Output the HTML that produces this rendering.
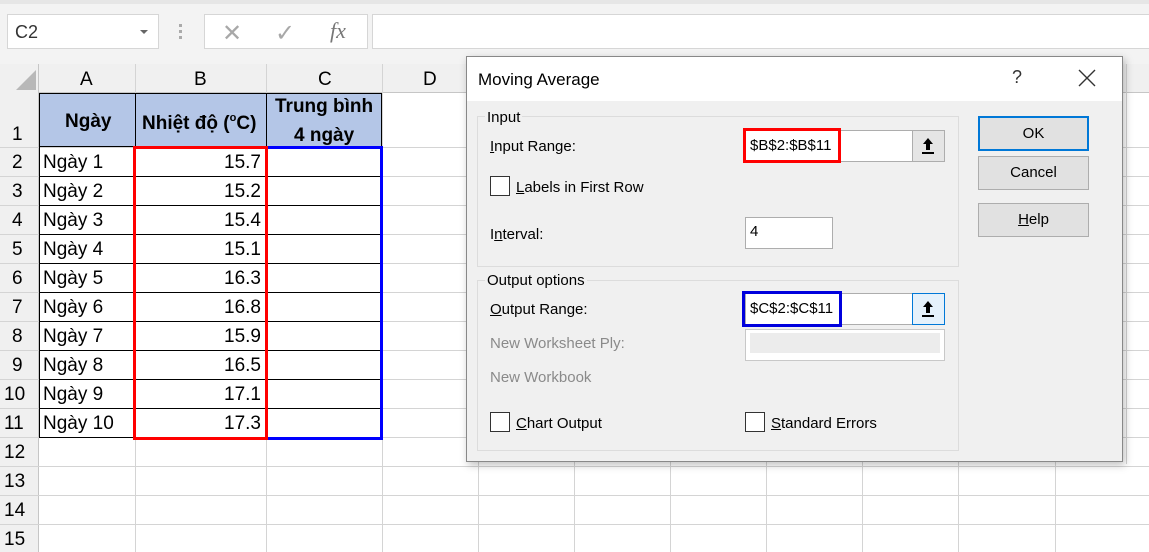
<!DOCTYPE html>
<html><head><meta charset="utf-8"><style>
*{box-sizing:border-box;margin:0;padding:0}
body{width:1149px;height:552px;overflow:hidden;background:#fff;font-family:"Liberation Sans",sans-serif;position:relative}
.a{position:absolute}
.t{font-size:19px;color:#000;white-space:nowrap}
.hl{position:absolute;height:1px;background:#d4d4d4}
.vl{position:absolute;width:1px;background:#d4d4d4}
.d{font-size:15px;color:#000;white-space:nowrap}
.g{color:#8a8a8a}
.cb{position:absolute;width:20px;height:20px;border:1px solid #333;background:#fff}
.btn{position:absolute;left:978px;width:111px;background:#e1e1e1;border:1px solid #adadad;font-size:15px;text-align:center}
</style></head><body>
<div class="a" style="left:0;top:0;width:1149px;height:64px;background:#f3f3f3"></div>
<div class="a" style="left:0;top:0;width:1149px;height:4px;background:#e6e6e6"></div>
<div class="a" style="left:7px;top:14px;width:152px;height:35px;background:#fff;border:1px solid #d6d6d6"></div>
<div class="a t" style="left:15px;top:22px;font-size:18px;color:#333">C2</div>
<div class="a" style="left:140px;top:30px;border-left:4px solid transparent;border-right:4px solid transparent;border-top:4px solid #666"></div>
<div class="a" style="left:179px;top:24px;width:3px;height:3px;background:#aaa;box-shadow:0 6px #aaa,0 12px #aaa"></div>
<div class="a" style="left:204px;top:14px;width:164px;height:35px;background:#fff;border:1px solid #d6d6d6"></div>
<div class="a" style="left:222px;top:19px;font-size:24px;color:#a8a8a8">✕</div>
<div class="a" style="left:275px;top:19px;font-size:24px;color:#a8a8a8">✓</div>
<div class="a" style="left:330px;top:18px;font-size:22px;color:#777;font-family:'Liberation Serif',serif;font-style:italic">fx</div>
<div class="a" style="left:372px;top:14px;width:790px;height:35px;background:#fff;border:1px solid #d6d6d6"></div>
<div class="a" style="left:0;top:64px;width:1149px;height:29px;background:#f0f0f0;border-bottom:1px solid #c6c6c6"></div>
<div class="a" style="left:0;top:64px;width:39px;height:488px;background:#f0f0f0;border-right:1px solid #c6c6c6"></div>
<div class="a" style="left:16px;top:70px;border-left:20px solid transparent;border-bottom:20px solid #b8b8b8"></div>
<div class="a t" style="left:80px;top:69px">A</div>
<div class="a t" style="left:194px;top:69px">B</div>
<div class="a t" style="left:318px;top:69px">C</div>
<div class="a t" style="left:423px;top:69px">D</div>
<div class="vl" style="left:135px;top:64px;height:488px"></div>
<div class="vl" style="left:266px;top:64px;height:488px"></div>
<div class="vl" style="left:382px;top:64px;height:488px"></div>
<div class="vl" style="left:478px;top:64px;height:488px"></div>
<div class="vl" style="left:574px;top:461px;height:91px"></div>
<div class="vl" style="left:670px;top:461px;height:91px"></div>
<div class="vl" style="left:766px;top:461px;height:91px"></div>
<div class="vl" style="left:862px;top:461px;height:91px"></div>
<div class="vl" style="left:958px;top:461px;height:91px"></div>
<div class="vl" style="left:1055px;top:461px;height:91px"></div>
<div class="vl" style="left:1126px;top:64px;height:400px"></div>
<div class="hl" style="left:0;top:147px;width:1149px"></div>
<div class="hl" style="left:0;top:176px;width:1149px"></div>
<div class="hl" style="left:0;top:205px;width:1149px"></div>
<div class="hl" style="left:0;top:234px;width:1149px"></div>
<div class="hl" style="left:0;top:263px;width:1149px"></div>
<div class="hl" style="left:0;top:292px;width:1149px"></div>
<div class="hl" style="left:0;top:321px;width:1149px"></div>
<div class="hl" style="left:0;top:350px;width:1149px"></div>
<div class="hl" style="left:0;top:379px;width:1149px"></div>
<div class="hl" style="left:0;top:408px;width:1149px"></div>
<div class="hl" style="left:0;top:437px;width:1149px"></div>
<div class="hl" style="left:0;top:466px;width:1149px"></div>
<div class="hl" style="left:0;top:495px;width:1149px"></div>
<div class="hl" style="left:0;top:524px;width:1149px"></div>
<div class="a" style="left:39px;top:93px;width:343px;height:54px;background:#b4c6e7;border:1px solid #000"></div>
<div class="a" style="left:135px;top:93px;width:1px;height:54px;background:#000"></div>
<div class="a" style="left:266px;top:93px;width:1px;height:54px;background:#000"></div>
<div class="a t" style="left:65px;top:111px;font-weight:bold">Ngày</div>
<div class="a t" style="left:142px;top:113px;font-weight:bold">Nhiệt độ (<span style="font-size:11px;position:relative;top:-8px">o</span>C)</div>
<div class="a t" style="left:275px;top:96px;font-weight:bold">Trung bình</div>
<div class="a t" style="left:294px;top:125px;font-weight:bold">4 ngày</div>
<div class="a" style="left:39px;top:147px;width:97px;height:291px;border-left:1px solid #000"></div>
<div class="a t" style="left:12px;top:124px">1</div>
<div class="a t" style="left:12px;top:152px">2</div><div class="a t" style="left:43px;top:152px">Ngày 1</div><div class="a t" style="left:224px;top:152px">15.7</div>
<div class="a t" style="left:12px;top:181px">3</div><div class="a t" style="left:43px;top:181px">Ngày 2</div><div class="a t" style="left:224px;top:181px">15.2</div>
<div class="a t" style="left:12px;top:210px">4</div><div class="a t" style="left:43px;top:210px">Ngày 3</div><div class="a t" style="left:224px;top:210px">15.4</div>
<div class="a t" style="left:12px;top:239px">5</div><div class="a t" style="left:43px;top:239px">Ngày 4</div><div class="a t" style="left:224px;top:239px">15.1</div>
<div class="a t" style="left:12px;top:268px">6</div><div class="a t" style="left:43px;top:268px">Ngày 5</div><div class="a t" style="left:224px;top:268px">16.3</div>
<div class="a t" style="left:12px;top:297px">7</div><div class="a t" style="left:43px;top:297px">Ngày 6</div><div class="a t" style="left:224px;top:297px">16.8</div>
<div class="a t" style="left:12px;top:326px">8</div><div class="a t" style="left:43px;top:326px">Ngày 7</div><div class="a t" style="left:224px;top:326px">15.9</div>
<div class="a t" style="left:12px;top:355px">9</div><div class="a t" style="left:43px;top:355px">Ngày 8</div><div class="a t" style="left:224px;top:355px">16.5</div>
<div class="a t" style="left:4px;top:384px">10</div><div class="a t" style="left:43px;top:384px">Ngày 9</div><div class="a t" style="left:224px;top:384px">17.1</div>
<div class="a t" style="left:4px;top:413px">11</div><div class="a t" style="left:43px;top:413px">Ngày 10</div><div class="a t" style="left:224px;top:413px">17.3</div>
<div class="a t" style="left:4px;top:442px">12</div>
<div class="a t" style="left:4px;top:471px">13</div>
<div class="a t" style="left:4px;top:500px">14</div>
<div class="a t" style="left:4px;top:529px">15</div>
<div class="a" style="left:39px;top:176px;width:343px;height:1px;background:#000;box-shadow:0 29px #000,0 58px #000,0 87px #000,0 116px #000,0 145px #000,0 174px #000,0 203px #000,0 232px #000,0 261px #000"></div>
<div class="a" style="left:133px;top:146px;width:135px;height:294px;border:3px solid #ff0000"></div>
<div class="a" style="left:268px;top:146px;width:115px;height:294px;border:3px solid #0000ff;border-left:none"></div>
<div class="a" style="left:466px;top:56px;width:657px;height:406px;background:#f0f0f0;border:1px solid #888;box-shadow:2px 3px 8px rgba(0,0,0,.25)"></div>
<div class="a" style="left:467px;top:57px;width:655px;height:44px;background:#fff"></div>
<div class="a" style="left:478px;top:70px;font-size:17px;color:#000">Moving Average</div>
<div class="a" style="left:1012px;top:67px;font-size:18px;color:#333">?</div>
<svg class="a" style="left:1078px;top:69px" width="18" height="18"><path d="M1 1L17 17M17 1L1 17" stroke="#333" stroke-width="1.4"/></svg>
<div class="a" style="left:477px;top:116px;width:482px;height:151px;border:1px solid #dcdcdc"></div>
<div class="a d" style="left:485px;top:109px;background:#f0f0f0;padding:0 2px">Input</div>
<div class="a d" style="left:490px;top:138px"><u>I</u>nput Range:</div>
<div class="a" style="left:745px;top:130px;width:200px;height:32px;background:#fff;border:1px solid #adadad"></div>
<div class="a" style="left:912px;top:130px;width:33px;height:32px;background:#e5e5e5;border:1px solid #adadad"></div>
<svg class="a" style="left:920px;top:137px" width="16" height="18"><path d="M8 1L3 7H6V13H10V7H13Z" fill="#000"/><rect x="2" y="15" width="12" height="2" fill="#000"/></svg>
<div class="a" style="left:743px;top:128px;width:98px;height:35px;border:3px solid #ff0000"></div>
<div class="a d" style="left:750px;top:137px">$B$2:$B$11</div>
<div class="cb" style="left:490px;top:176px"></div>
<div class="a d" style="left:516px;top:179px"><u>L</u>abels in First Row</div>
<div class="a d" style="left:490px;top:226px">I<u>n</u>terval:</div>
<div class="a" style="left:745px;top:217px;width:88px;height:32px;background:#fff;border:1px solid #adadad"></div>
<div class="a d" style="left:750px;top:223px">4</div>
<div class="a" style="left:477px;top:280px;width:482px;height:171px;border:1px solid #dcdcdc"></div>
<div class="a d" style="left:485px;top:272px;background:#f0f0f0;padding:0 2px">Output options</div>
<div class="a d" style="left:490px;top:301px"><u>O</u>utput Range:</div>
<div class="a" style="left:745px;top:293px;width:200px;height:32px;background:#fff;border:1px solid #adadad"></div>
<div class="a" style="left:912px;top:293px;width:33px;height:32px;background:#e5f1fb;border:1px solid #0078d7"></div>
<svg class="a" style="left:920px;top:300px" width="16" height="18"><path d="M8 1L3 7H6V13H10V7H13Z" fill="#000"/><rect x="2" y="15" width="12" height="2" fill="#000"/></svg>
<div class="a" style="left:742px;top:291px;width:100px;height:36px;border:3px solid #0000dd"></div>
<div class="a d" style="left:750px;top:300px">$C$2:$C$11</div>
<div class="a d g" style="left:490px;top:335px">New Worksheet Ply:</div>
<div class="a" style="left:745px;top:329px;width:200px;height:32px;background:#fff;border:1px solid #c8c8c8"></div>
<div class="a" style="left:750px;top:333px;width:190px;height:20px;background:#ececec"></div>
<div class="a d g" style="left:490px;top:369px">New Workbook</div>
<div class="cb" style="left:490px;top:412px"></div>
<div class="a d" style="left:516px;top:415px"><u>C</u>hart Output</div>
<div class="cb" style="left:745px;top:412px"></div>
<div class="a d" style="left:771px;top:415px"><u>S</u>tandard Errors</div>
<div class="btn" style="top:116px;height:35px;line-height:31px;border:2px solid #0078d7">OK</div>
<div class="btn" style="top:156px;height:34px;line-height:32px">Cancel</div>
<div class="btn" style="top:203px;height:34px;line-height:32px"><u>H</u>elp</div>
</body></html>
